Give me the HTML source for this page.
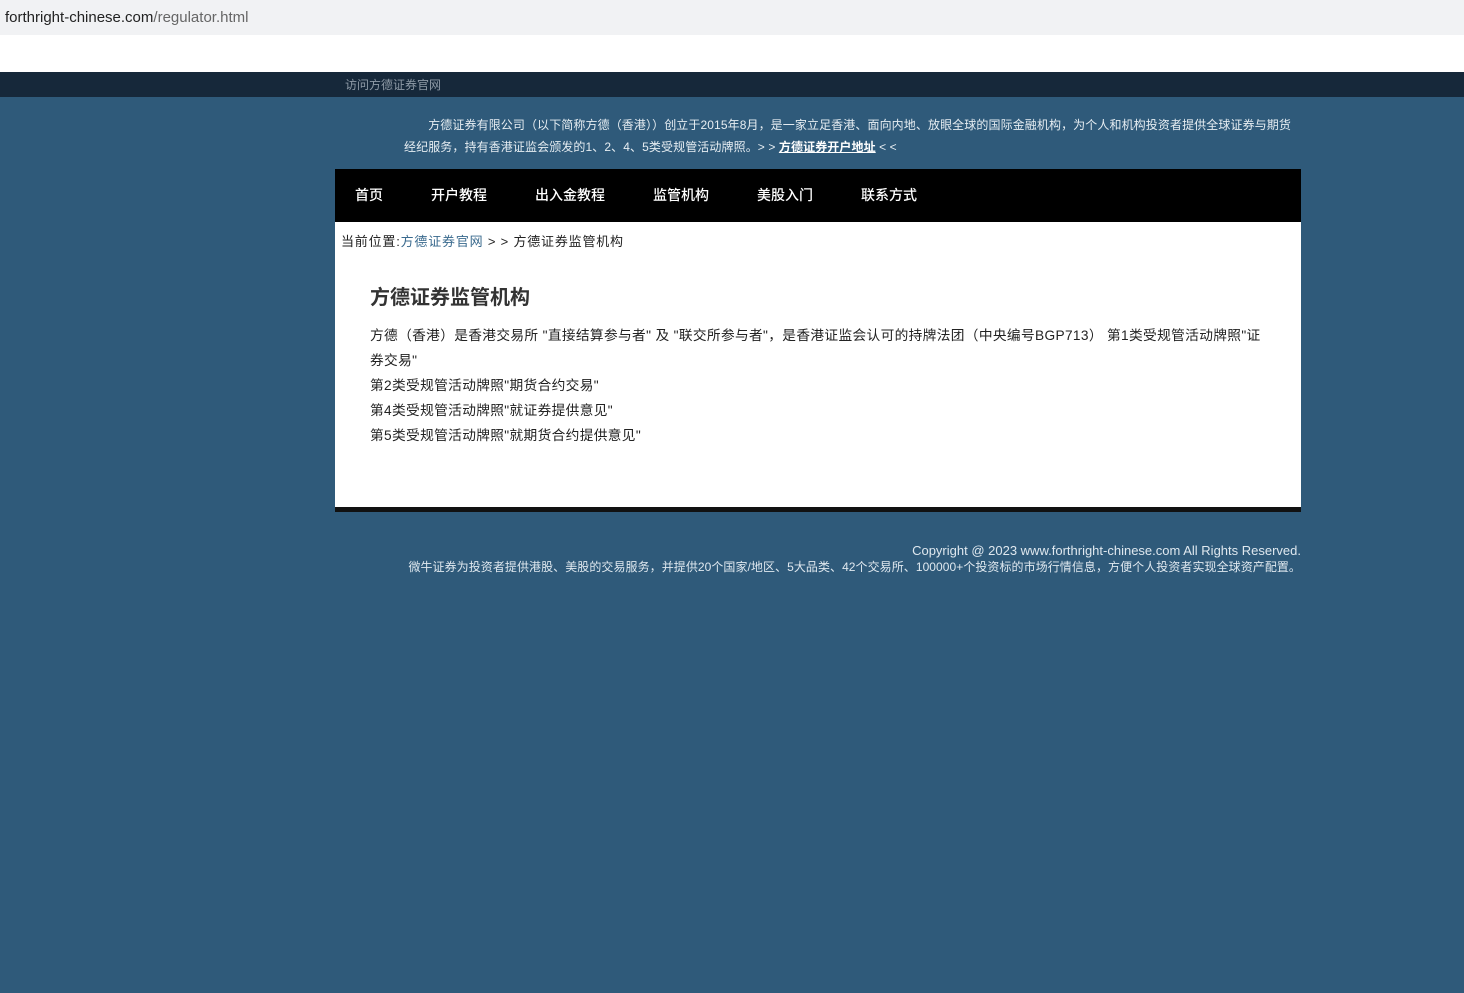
<!DOCTYPE html>
<html><head><meta charset="utf-8"><style>
*{margin:0;padding:0;box-sizing:border-box}
body{width:1464px;height:993px;background:#2f5a7a;font-family:"Liberation Sans","Noto Sans CJK SC",sans-serif;overflow:hidden;position:relative}
.url{height:35px;background:#f1f2f4;font-size:15px;color:#222;padding:9px 0 0 5px}
.url span{color:#666}
.white{height:37px;background:#fff}
.topbar{height:25px;background:#16283a;color:#8e9aa6;font-size:12px;padding:6px 0 0 345px;line-height:14px}
.intro{position:absolute;left:404px;top:114px;width:900px;color:#e6edf2;font-size:12px;line-height:22px;white-space:nowrap;letter-spacing:0.1px}
.intro a{color:#fff;text-decoration:underline;font-weight:bold}
.nav{position:absolute;left:335px;top:169px;width:966px;height:53px;background:#000;padding-left:20px}
.nav span{float:left;color:#fff;font-size:14px;line-height:53px;margin-right:48px;font-weight:500}
.box{position:absolute;left:335px;top:222px;width:966px;height:290px;background:#fff;border-bottom:5px solid #111}
.bc{position:absolute;left:6px;top:9px;font-size:13px;color:#222;letter-spacing:0.8px}
.bc a{color:#3a6a8e}
h1{position:absolute;left:35px;top:59px;font-size:20px;color:#333;font-weight:bold}
.p{position:absolute;left:35px;top:101px;font-size:13.7px;line-height:25px;color:#222;white-space:nowrap;letter-spacing:0.35px}
.foot{position:absolute;right:163px;top:543px;text-align:right;color:#dfe8ef;font-size:13px;line-height:16px}
.foot div+div{font-size:12px;letter-spacing:0.06px}
</style></head><body>
<div class="url">forthright-chinese.com<span>/regulator.html</span></div>
<div class="white"></div>
<div class="topbar">访问方德证券官网</div>
<div class="intro">　　方德证券有限公司（以下简称方德（香港））创立于2015年8月，是一家立足香港、面向内地、放眼全球的国际金融机构，为个人和机构投资者提供全球证券与期货<br>经纪服务，持有香港证监会颁发的1、2、4、5类受规管活动牌照。&gt; &gt; <a>方德证券开户地址</a> &lt; &lt;</div>
<div class="nav"><span>首页</span><span>开户教程</span><span>出入金教程</span><span>监管机构</span><span>美股入门</span><span>联系方式</span></div>
<div class="box">
<div class="bc">当前位置:<a>方德证券官网</a> &gt; &gt; 方德证券监管机构</div>
<h1>方德证券监管机构</h1>
<div class="p">方德（香港）是香港交易所 "直接结算参与者" 及 "联交所参与者"，是香港证监会认可的持牌法团（中央编号BGP713） 第1类受规管活动牌照"证<br>券交易"<br>第2类受规管活动牌照"期货合约交易"<br>第4类受规管活动牌照"就证券提供意见"<br>第5类受规管活动牌照"就期货合约提供意见"</div>
</div>
<div class="foot"><div>Copyright @ 2023 www.forthright-chinese.com All Rights Reserved.</div><div>微牛证券为投资者提供港股、美股的交易服务，并提供20个国家/地区、5大品类、42个交易所、100000+个投资标的市场行情信息，方便个人投资者实现全球资产配置。</div></div>
</body></html>
